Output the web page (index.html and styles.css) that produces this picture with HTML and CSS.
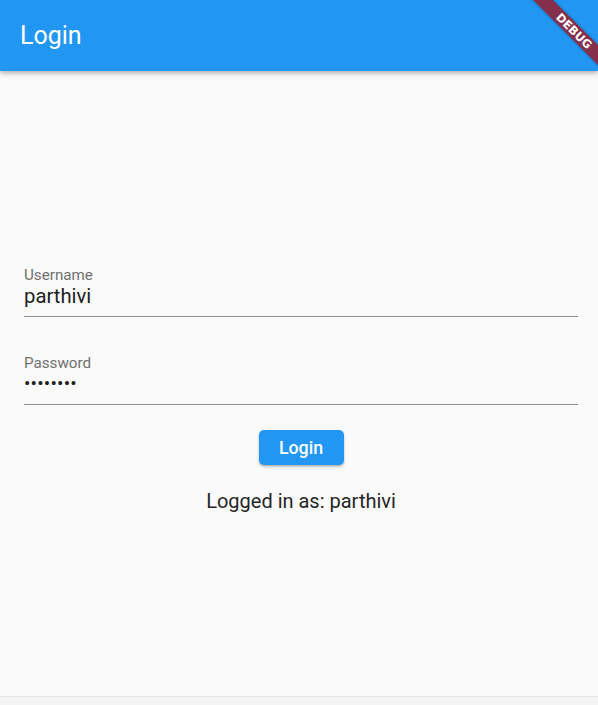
FILE: index.html
```html
<!DOCTYPE html>
<html lang="en">
<head>
<meta charset="utf-8">
<title>Login</title>
<link rel="stylesheet" href="styles.css">
</head>
<body>
<div class="app">
  <header class="appbar">
    <h1 class="appbar-title">Login</h1>
  </header>
  <main class="content">
    <div class="field">
      <label class="field-label">Username</label>
      <div class="field-value">parthivi</div>
    </div>
    <div class="field field-second">
      <label class="field-label">Password</label>
      <div class="field-value field-dots">••••••••</div>
    </div>
    <div class="actions">
      <button class="btn">Login</button>
    </div>
    <p class="status">Logged in as: parthivi</p>
  </main>
  <footer class="bottom-bar"></footer>
  <div class="debug-banner">DEBUG</div>
</div>
</body>
</html>
```

FILE: styles.css
```css
html, body {
  margin: 0;
  padding: 0;
}

body {
  width: 598px;
  height: 705px;
  overflow: hidden;
  background: #fafafa;
  font-family: Roboto, "Liberation Sans", sans-serif;
}

.app {
  position: relative;
  display: flex;
  flex-direction: column;
  height: 705px;
  overflow: hidden;
}

.appbar {
  position: relative;
  z-index: 2;
  height: 71px;
  flex: none;
  background: #2196f3;
  display: flex;
  align-items: center;
  padding-left: 20px;
  box-shadow: 0 2px 4px rgba(0, 0, 0, 0.22), 0 4px 6px rgba(0, 0, 0, 0.08);
}

.appbar-title {
  margin: 0;
  padding-top: 1px;
  font-size: 25px;
  line-height: 30px;
  font-weight: 400;
  color: #ffffff;
}

.content {
  flex: 1;
  display: flex;
  flex-direction: column;
  padding: 195px 20px 0 24px;
}

.field {
  display: flex;
  flex-direction: column;
  border-bottom: 1px solid #8e8e8e;
}

.field-second {
  margin-top: 37px;
}

.field-label {
  font-size: 15.2px;
  line-height: 18px;
  color: #707070;
}

.field-value {
  font-size: 20.3px;
  line-height: 24px;
  color: #212121;
  padding-bottom: 8px;
}

.field-dots {
  font-size: 19px;
  letter-spacing: 0.2px;
}

.actions {
  display: flex;
  justify-content: center;
  margin-top: 25px;
}

.btn {
  height: 35px;
  width: 85px;
  border: none;
  border-radius: 5px;
  background: #2196f3;
  color: #ffffff;
  font-family: Roboto, "Liberation Sans", sans-serif;
  font-size: 17.8px;
  font-weight: 500;
  padding: 0;
  box-shadow: 0 2px 3px rgba(0, 0, 0, 0.22), 0 1px 1px rgba(0, 0, 0, 0.1);
}

.status {
  margin: 24px 0 0;
  text-align: center;
  font-size: 20px;
  line-height: 24px;
  color: #262626;
}

.bottom-bar {
  height: 8px;
  flex: none;
  background: #f4f4f4;
  border-top: 1px solid #e4e4e4;
}

.debug-banner {
  position: absolute;
  z-index: 5;
  left: 514px;
  top: 24px;
  width: 120px;
  height: 14px;
  transform: rotate(45deg);
  background: #842f4c;
  color: #ffffff;
  font-family: "DejaVu Sans", Roboto, sans-serif;
  font-weight: 900;
  font-size: 11.5px;
  line-height: 14px;
  text-align: center;
  letter-spacing: 0;
  box-shadow: 0 0 3px rgba(0, 0, 0, 0.3);
}
```
